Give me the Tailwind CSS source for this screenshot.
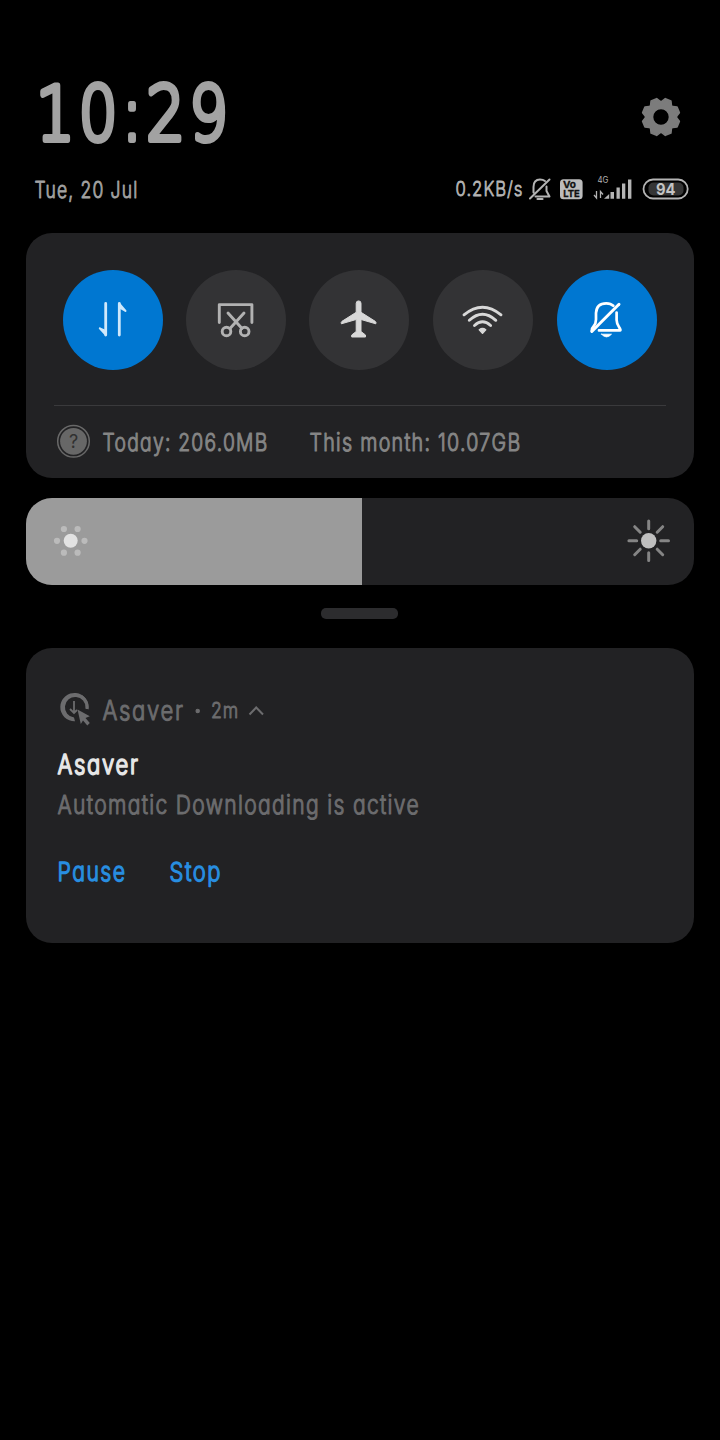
<!DOCTYPE html>
<html lang="en">
<head>
<meta charset="utf-8">
<title>Notification shade</title>
<script src="https://cdn.jsdelivr.net/npm/@tailwindcss/browser@4"></script>
</head>
<body class="bg-black w-[720px] h-[1440px] overflow-hidden font-['Inter',sans-serif] [font-feature-settings:'cv11'] [&_svg]:block [&_svg]:shrink-0 [&_svg]:overflow-visible [&_text]:[stroke-linejoin:round] [&_text]:[paint-order:stroke]">
<main class="flex flex-col h-full px-[26px] pt-[70px]">
  <!-- clock -->
  <header class="flex items-start justify-between h-[100px] pl-3 pr-[13.5px]">
    <svg class="w-[192px] h-[90px] text-[#a2a2a2]" viewBox="38 70 192 90" fill="currentColor" stroke="currentColor" stroke-width="6" font-family="DejaVu Sans Light, DejaVu Sans" font-weight="200" font-size="75" letter-spacing="5"><text x="36" y="140" textLength="196" lengthAdjust="spacingAndGlyphs">10:29</text></svg>
    <svg class="w-10 h-10 mt-[26.5px]" viewBox="-20 -20 40 40">
      <g fill="#7c7c7c" stroke="#7c7c7c" stroke-width="1.6" stroke-linejoin="round">
        <path id="t" d="M-5 -15 L-3 -18.6 L3 -18.6 L5 -15Z" transform="rotate(22.5)"/>
        <use href="#t" transform="rotate(45)"/><use href="#t" transform="rotate(90)"/><use href="#t" transform="rotate(135)"/><use href="#t" transform="rotate(180)"/><use href="#t" transform="rotate(225)"/><use href="#t" transform="rotate(270)"/><use href="#t" transform="rotate(315)"/>
      </g>
      <circle r="12" fill="none" stroke="#7c7c7c" stroke-width="8.6"/>
    </svg>
  </header>

  <!-- date and status icons -->
  <div class="flex justify-between h-[63px] pl-[9px] pr-[5px]">
    <svg class="w-[103px] h-[38px]" viewBox="35 170 103 38" fill="#a2a2a2" stroke="#a2a2a2" stroke-width=".9" font-size="22.500" font-weight="300" letter-spacing="1.500"><text x="34.500" y="197.700" textLength="104" lengthAdjust="spacingAndGlyphs">Tue, 20 Jul</text></svg>
    <div class="flex">
      <svg class="w-[72px] h-[38px]" viewBox="456 170 72 38" fill="#b4b4b4" stroke="#b4b4b4" stroke-width=".8" font-size="20" font-weight="300" letter-spacing="1.200"><text x="455.500" y="196" textLength="68" lengthAdjust="spacingAndGlyphs">0.2KB/s</text></svg>
      <svg class="w-[32px] h-[38px]" viewBox="528 170 32 38" fill="none" stroke="#b4b4b4" stroke-width="2" stroke-linecap="round" stroke-linejoin="round">
        <path d="M530 198.500L549.500 179.500M533.500 192.500V187Q533.500 179.500 540 179.500Q543 179.500 545 181M546.500 186.500V191L549.500 196.500H535.500"/><path d="M537.500 199H542.500" stroke-width="2.200"/>
      </svg>
      <svg class="w-[32px] h-[38px]" viewBox="560 170 32 38" font-weight="700" fill="#111" stroke="#111" stroke-width=".3">
        <rect x="560" y="179.300" width="22.600" height="20" rx="3.500" fill="#bcbcbc" stroke="none"/>
        <text x="563" y="188.300" font-size="9.500" textLength="13" lengthAdjust="spacingAndGlyphs">Vo</text><text x="563.300" y="197.400" font-size="9.500" textLength="16.500" lengthAdjust="spacingAndGlyphs">LTE</text>
      </svg>
      <svg class="w-[50px] h-[38px]" viewBox="592 170 50 38" fill="#b4b4b4">
        <text x="597.500" y="183" font-size="8.500" textLength="11" lengthAdjust="spacingAndGlyphs">4G</text>
        <path d="M596.500 191V198L594 195M600.500 198V191.500L603 194.500" fill="none" stroke="#b4b4b4" stroke-width="1.300"/>
        <path d="M604 198.800L609.200 194V198.800ZM610.500 192h3.500v6.800h-3.500ZM616.500 187.500h3.300v11.300h-3.300ZM622 183.500h3.300v15.300h-3.300ZM628 179.500h3.400v19.300h-3.400Z"/>
      </svg>
      <svg class="w-[47px] h-[38px]" viewBox="642 170 47 38">
        <rect x="643.500" y="179.500" width="44.200" height="19" rx="9.500" fill="none" stroke="#b4b4b4" stroke-width="1.800"/>
        <rect x="648.500" y="182.500" width="35" height="13" rx="5" fill="#353535"/>
        <text x="656" y="195" font-size="16.500" font-weight="700" fill="#c4c4c4" textLength="19.500" lengthAdjust="spacingAndGlyphs">94</text>
      </svg>
    </div>
  </div>

  <!-- quick toggles -->
  <section class="h-[245px] rounded-[26px] bg-[#222224] px-7 pt-[37px]">
    <div class="flex gap-[23px] px-[9px]">
      <div class="size-[100px] rounded-full bg-[#0077d1]"><svg class="size-[100px]" viewBox="63 270 100 100" fill="none" stroke="#cfe8fb" stroke-width="2.800" stroke-linecap="round" stroke-linejoin="round"><path d="M105.700 303.500V335M119.300 335V303.500"/><path d="M105.500 334.500L99.800 328.300L105.500 331ZM119.500 304L125.500 311L119.500 307.500Z" stroke-width="2" fill="#cfe8fb"/></svg></div>
      <div class="size-[100px] rounded-full bg-[#333335]"><svg class="size-[100px]" viewBox="186 270 100 100" fill="none" stroke="#b2b2b2" stroke-width="2.900" stroke-linecap="round" stroke-linejoin="round"><path d="M219.300 322.500V304.600H251.900V322.500M228 313L242 328.500M244 313L230 328.500"/><circle cx="226.500" cy="331.500" r="4.300"/><circle cx="244.700" cy="331.500" r="4.300"/></svg></div>
      <div class="size-[100px] rounded-full bg-[#333335]"><svg class="size-[100px]" viewBox="309 270 100 100" fill="#d8d8d8" stroke="#d8d8d8" stroke-width="1" stroke-linejoin="round"><path d="M356.200 303.300a2.400 2.400 0 0 1 4.800 0V312.300L375.200 321.300Q376.500 322.300 375.800 323.800L361 319.500V331.500L365.500 335V337H351.700V335L356.200 331.500V319.500L341.400 323.800Q340.700 322.300 342 321.300L356.200 312.300Z"/></svg></div>
      <div class="ml-px size-[100px] rounded-full bg-[#333335]"><svg class="size-[100px]" viewBox="433 270 100 100" fill="none" stroke="#d8d8d8" stroke-width="2.900" stroke-linecap="round"><path d="M464 314.800Q482.500 299.500 501 314.800M469.300 320.300Q482.500 308.300 495.800 320.300M474.500 325.500Q482.500 318 490.600 325.500"/><path d="M479.300 329.800Q482.500 327.300 485.700 329.800L482.500 333.200Z" fill="#d8d8d8" stroke-width="1.500" stroke-linejoin="round"/></svg></div>
      <div class="ml-px size-[100px] rounded-full bg-[#0077d1]"><svg class="size-[100px]" viewBox="557 270 100 100" fill="none" stroke="#fff" stroke-width="2.700" stroke-linecap="round" stroke-linejoin="round"><path d="M591.800 331.500L619 304.300" stroke-width="3"/><path d="M591.800 330.500Q591.500 328.500 593.500 326.500Q596 323.500 596 319.500V313Q596.500 303.300 606.300 303.300Q610.800 303.300 613.300 305.800M616.600 312.500V320Q616.800 324 619 327Q621 330.300 620.200 330.400H599"/><path d="M601.500 334.200H611.500Q606.500 339.800 601.500 334.200Z" fill="#fff" stroke-width=".8"/></svg></div>
    </div>
    <div class="mt-[35px] h-px bg-[#3a3a3c]"></div>
    <div class="flex">
      <svg class="w-[49px] h-[71px]" viewBox="54 406 49 71"><circle cx="73.500" cy="441.300" r="15.800" fill="none" stroke="#686868" stroke-width="1.500"/><circle cx="73.500" cy="441.300" r="13.400" fill="#676767"/><text x="73.500" y="447.500" font-size="18" text-anchor="middle" fill="#303030">?</text></svg>
      <svg class="w-[207px] h-[71px]" viewBox="103 406 207 71" fill="#858585" stroke="#858585" stroke-width="1.100" font-size="24.500" font-weight="300" letter-spacing="1.600"><text x="102.500" y="450.500" textLength="166" lengthAdjust="spacingAndGlyphs">Today: 206.0MB</text></svg>
      <svg class="w-[211px] h-[71px]" viewBox="310 406 211 71" fill="#858585" stroke="#858585" stroke-width="1.100" font-size="24.500" font-weight="300" letter-spacing="1.600"><text x="309.500" y="450.500" textLength="212" lengthAdjust="spacingAndGlyphs">This month: 10.07GB</text></svg>
    </div>
  </section>

  <!-- brightness -->
  <section class="mt-5 flex h-[87px] rounded-[26px] overflow-hidden bg-[#222224]">
    <div class="w-[336px] bg-[#9b9b9b]"><svg class="w-[100px] h-[87px]" viewBox="26 498 100 87" fill="#bbb"><circle cx="70.700" cy="540.800" r="7" fill="#e2e2e2"/><circle cx="57" cy="540.800" r="3.100"/><circle cx="84.500" cy="540.800" r="3.100"/><circle cx="63.900" cy="529" r="3.100"/><circle cx="77.600" cy="529" r="3.100"/><circle cx="63.900" cy="552.700" r="3.100"/><circle cx="77.600" cy="552.700" r="3.100"/></svg></div>
    <svg class="ml-auto w-[94px] h-[87px]" viewBox="600 498 94 87"><circle cx="648.700" cy="540.700" r="7.700" fill="#bfbfbf"/><g transform="translate(648.700 540.700)" stroke="#858585" stroke-width="3" stroke-linecap="round"><path d="M0 -19.800V-12M0 19.800V12M-19.800 0H-12M19.800 0H12M-14 -14L-8.500 -8.500M14 -14L8.500 -8.500M-14 14L-8.500 8.500M14 14L8.500 8.500"/></g></svg>
  </section>
  <div class="mt-[23px] ml-[295px] w-[77px] h-[11px] rounded-[5px] bg-[#2c2c2e]"></div>

  <!-- notification -->
  <article class="mt-[29px] h-[294.500px] rounded-[26px] bg-[#222224] pl-8 pt-10">
    <div class="flex">
      <svg class="w-[45px] h-[48px]" viewBox="57 688 45 48" fill="#6c6c6e"><path fill-rule="evenodd" d="M74 721.300A14.200 14.200 0 1 1 87.500 709.500L84.500 708A10.300 10.300 0 1 0 73 717.500Z"/><path d="M81 698Q87 703 84.500 709L87.300 709Q88.500 701 81 695Z"/><path d="M73 701V712.500M69 709L73 713L76 710" fill="none" stroke="#6c6c6e" stroke-width="1.800"/><path d="M76.500 709.500L88.800 716.300L84.500 718L88.800 723L86.300 725.500L82 720.500L79.800 724Z"/></svg>
      <svg class="w-[109px] h-[48px]" viewBox="103 688 109 48" fill="#6c6c6e" stroke="#6c6c6e" stroke-width="1.100" font-size="27.500" font-weight="300" letter-spacing="2"><text x="102.500" y="719.700" textLength="82" lengthAdjust="spacingAndGlyphs">Asaver</text><circle cx="197.700" cy="711" r="1.700"/></svg>
      <svg class="w-[37px] h-[48px]" viewBox="212 688 37 48" fill="#6c6c6e" stroke="#6c6c6e" stroke-width=".9" font-size="21" font-weight="300" letter-spacing="1"><text x="211" y="718" textLength="28" lengthAdjust="spacingAndGlyphs">2m</text></svg>
      <svg class="w-[16px] h-[48px]" viewBox="249 688 16 48" fill="none" stroke="#6c6c6e" stroke-width="2"><path d="M249.500 714.500L256.200 707.500L263 714.500"/></svg>
    </div>
    <svg class="w-[82px] h-[48px]" viewBox="58 736 82 48" fill="#e6e6e6" stroke="#e6e6e6" stroke-width="1.600" font-size="26.500" font-weight="300" letter-spacing="2"><text x="57.500" y="773.500" textLength="82" lengthAdjust="spacingAndGlyphs">Asaver</text></svg>
    <svg class="w-[362px] h-[46px]" viewBox="58 784 362 46" fill="#6c6c6e" stroke="#6c6c6e" stroke-width="1.100" font-size="26" font-weight="300" letter-spacing="1.600"><text x="57.500" y="813.700" textLength="362.500" lengthAdjust="spacingAndGlyphs">Automatic Downloading is active</text></svg>
    <div class="flex">
      <svg class="w-[112px] h-[60px]" viewBox="58 830 112 60" fill="#288ee0" stroke="#288ee0" stroke-width="1.300" font-size="26" font-weight="300" letter-spacing="1.800"><text x="57.500" y="880.500" textLength="69" lengthAdjust="spacingAndGlyphs">Pause</text></svg>
      <svg class="w-[52px] h-[60px]" viewBox="170 830 52 60" fill="#288ee0" stroke="#288ee0" stroke-width="1.300" font-size="26" font-weight="300" letter-spacing="1.800"><text x="169.500" y="880.500" textLength="52.500" lengthAdjust="spacingAndGlyphs">Stop</text></svg>
    </div>
  </article>
</main>
</body>
</html>
